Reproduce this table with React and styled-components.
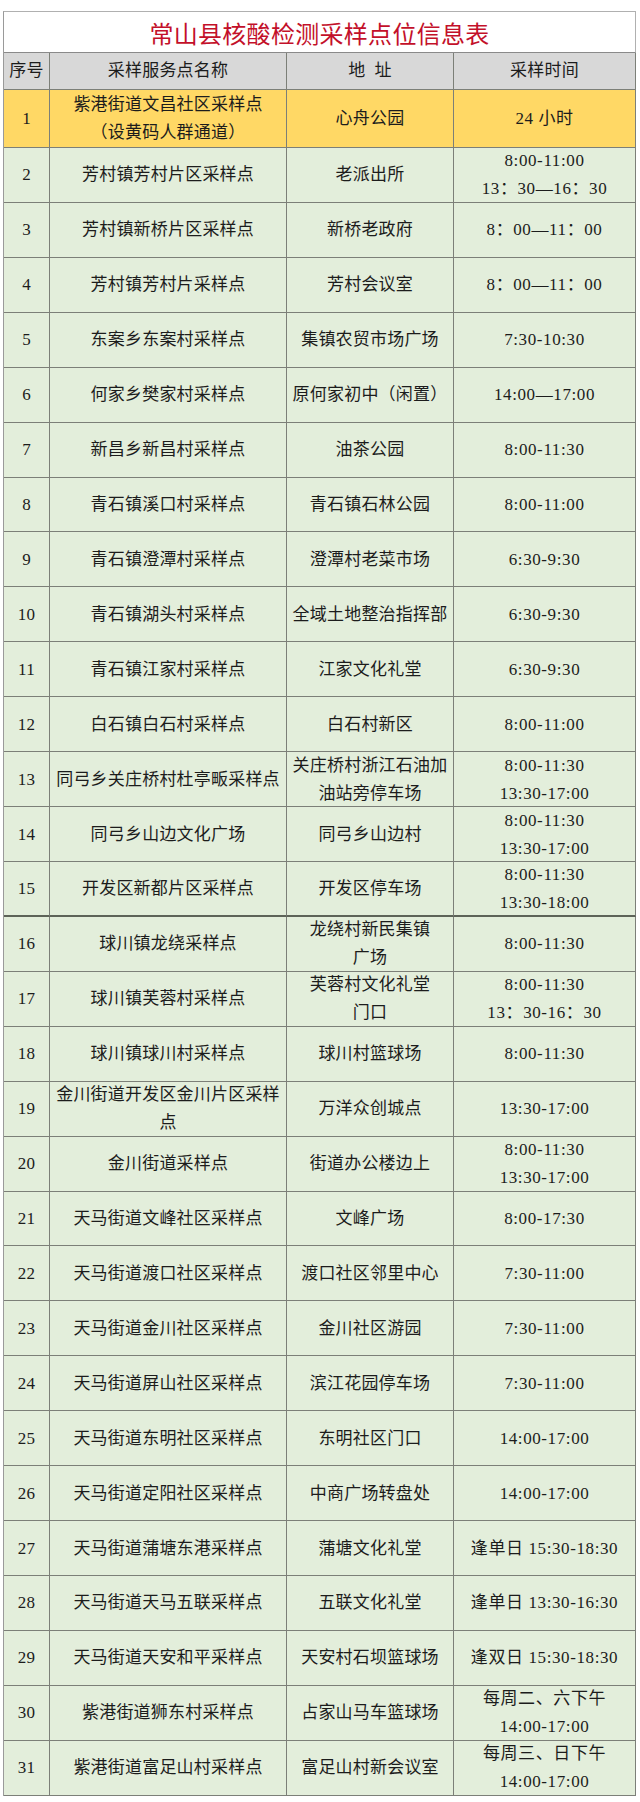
import React from 'react';
import styled, { createGlobalStyle } from 'styled-components';

const GlobalStyle = createGlobalStyle`
  html, body {
    margin: 0;
    padding: 0;
    background: #ffffff;
  }
  body {
    font-family: 'Liberation Serif', 'Noto Sans CJK SC', serif;
    color: #1c1c1c;
  }
`;

const Page = styled.div`
  width: 640px;
  height: 1802px;
  padding: 11px 0 0 3px;
  box-sizing: border-box;
  background: #ffffff;
`;

const Sheet = styled.div`
  display: grid;
  grid-template-columns: 46px 237px 167px 182px;
  grid-template-rows: 41px 37px 58px;
  grid-auto-rows: 54.93px;
  width: 633px;
  box-sizing: border-box;
  border-left: 1px solid #9a9a9a;
  border-top: 1px solid #b0b0b0;
`;

const Title = styled.div`
  grid-column: 1 / -1;
  display: flex;
  align-items: center;
  justify-content: center;
  background: #ffffff;
  border-right: 1px solid #b0b0b0;
  border-bottom: 1px solid #8a8a8a;
  color: #c3102a;
  font-size: 24px;
  letter-spacing: 0.3px;
`;

const tones = {
  head: '#d8d8d8',
  yellow: '#ffd865',
  green: '#e3eedb',
};

const Cell = styled.div`
  display: flex;
  align-items: center;
  justify-content: center;
  text-align: center;
  box-sizing: border-box;
  background: ${(p) => tones[p.$tone] || tones.green};
  border-right: 1px solid #7c7f78;
  border-bottom: ${(p) => (p.$strong ? '2px solid #5d6358' : '1px solid #7c7f78')};
  font-size: 17px;
  line-height: 28px;
  letter-spacing: ${(p) => (p.$time ? '0.6px' : '0.2px')};
  white-space: nowrap;
  padding-top: ${(p) => (p.$tone === 'head' ? '0' : '1px')};
`;

const Lines = styled.div`
  display: flex;
  flex-direction: column;
  align-items: center;
`;

const rows = [
  ['紫港街道文昌社区采样点|（设黄码人群通道）', '心舟公园', '24 小时'],
  ['芳村镇芳村片区采样点', '老派出所', '8:00-11:00|13：30—16：30'],
  ['芳村镇新桥片区采样点', '新桥老政府', '8：00—11：00'],
  ['芳村镇芳村片采样点', '芳村会议室', '8：00—11：00'],
  ['东案乡东案村采样点', '集镇农贸市场广场', '7:30-10:30'],
  ['何家乡樊家村采样点', '原何家初中（闲置）', '14:00—17:00'],
  ['新昌乡新昌村采样点', '油茶公园', '8:00-11:30'],
  ['青石镇溪口村采样点', '青石镇石林公园', '8:00-11:00'],
  ['青石镇澄潭村采样点', '澄潭村老菜市场', '6:30-9:30'],
  ['青石镇湖头村采样点', '全域土地整治指挥部', '6:30-9:30'],
  ['青石镇江家村采样点', '江家文化礼堂', '6:30-9:30'],
  ['白石镇白石村采样点', '白石村新区', '8:00-11:00'],
  ['同弓乡关庄桥村杜亭畈采样点', '关庄桥村浙江石油加|油站旁停车场', '8:00-11:30|13:30-17:00'],
  ['同弓乡山边文化广场', '同弓乡山边村', '8:00-11:30|13:30-17:00'],
  ['开发区新都片区采样点', '开发区停车场', '8:00-11:30|13:30-18:00'],
  ['球川镇龙绕采样点', '龙绕村新民集镇|广场', '8:00-11:30'],
  ['球川镇芙蓉村采样点', '芙蓉村文化礼堂|门口', '8:00-11:30|13：30-16：30'],
  ['球川镇球川村采样点', '球川村篮球场', '8:00-11:30'],
  ['金川街道开发区金川片区采样|点', '万洋众创城点', '13:30-17:00'],
  ['金川街道采样点', '街道办公楼边上', '8:00-11:30|13:30-17:00'],
  ['天马街道文峰社区采样点', '文峰广场', '8:00-17:30'],
  ['天马街道渡口社区采样点', '渡口社区邻里中心', '7:30-11:00'],
  ['天马街道金川社区采样点', '金川社区游园', '7:30-11:00'],
  ['天马街道屏山社区采样点', '滨江花园停车场', '7:30-11:00'],
  ['天马街道东明社区采样点', '东明社区门口', '14:00-17:00'],
  ['天马街道定阳社区采样点', '中商广场转盘处', '14:00-17:00'],
  ['天马街道蒲塘东港采样点', '蒲塘文化礼堂', '逢单日 15:30-18:30'],
  ['天马街道天马五联采样点', '五联文化礼堂', '逢单日 13:30-16:30'],
  ['天马街道天安和平采样点', '天安村石坝篮球场', '逢双日 15:30-18:30'],
  ['紫港街道狮东村采样点', '占家山马车篮球场', '每周二、六下午|14:00-17:00'],
  ['紫港街道富足山村采样点', '富足山村新会议室', '每周三、日下午|14:00-17:00'],
];

function Text({ value }) {
  const parts = value.split('|');
  if (parts.length === 1) return value;
  return (
    <Lines>
      {parts.map((line) => (
        <span key={line}>{line}</span>
      ))}
    </Lines>
  );
}

export default function App() {
  return (
    <>
      <GlobalStyle />
      <Page>
        <Sheet>
          <Title>常山县核酸检测采样点位信息表</Title>
          <Cell $tone="head">序号</Cell>
          <Cell $tone="head">采样服务点名称</Cell>
          <Cell $tone="head">地&nbsp;&nbsp;址</Cell>
          <Cell $tone="head">采样时间</Cell>
          {rows.map((row, i) => {
            const tone = i === 0 ? 'yellow' : 'green';
            const strong = i === 14;
            return (
              <React.Fragment key={i}>
                <Cell $tone={tone} $strong={strong}>{i + 1}</Cell>
                {row.map((value, j) => (
                  <Cell key={j} $tone={tone} $strong={strong} $time={j === 2}>
                    <Text value={value} />
                  </Cell>
                ))}
              </React.Fragment>
            );
          })}
        </Sheet>
      </Page>
    </>
  );
}
